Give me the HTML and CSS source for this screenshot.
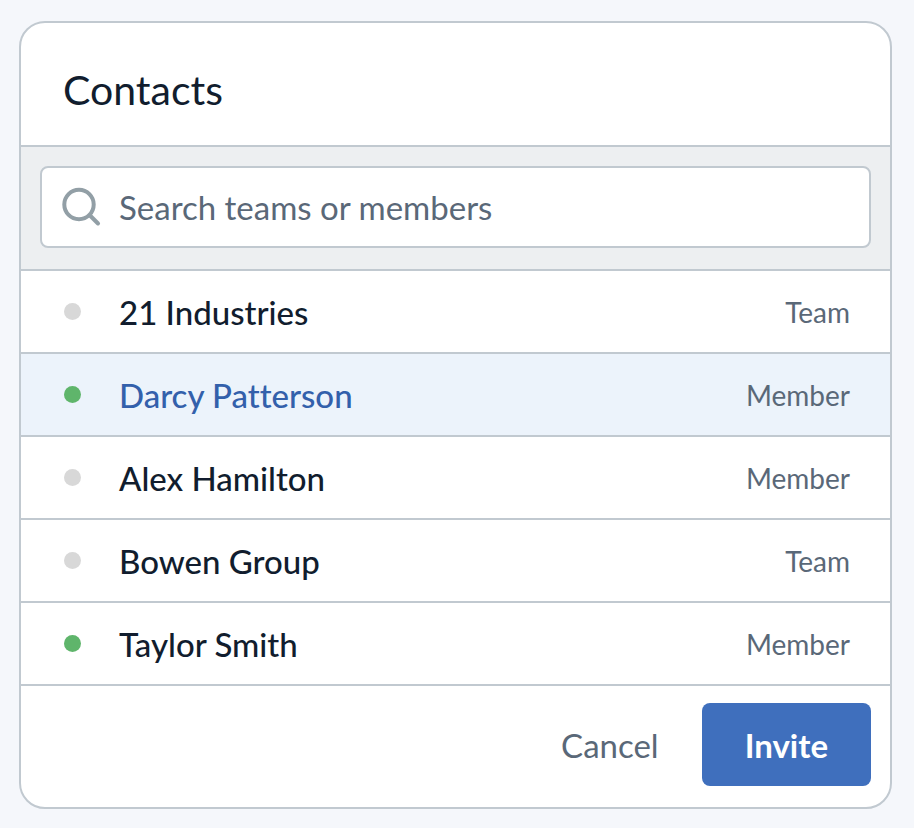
FILE: index.html
```
<!DOCTYPE html>
<html lang="en">
<head>
    <meta charset="UTF-8">
    <meta name="viewport" content="width=device-width, initial-scale=1.0">
    <title>Contacts</title>
    <link rel="stylesheet" href="styles.css">
</head>
<body>

    <div class="card">
        <header class="card-header">
            <h1>Contacts</h1>
        </header>

        <!-- Search Section -->
        <div class="search">
            <label class="search-box">
                <svg class="search-icon" viewBox="0 0 40 40" aria-hidden="true">
                    <circle cx="17" cy="17.5" r="14.7"></circle>
                    <path d="M28 28.5l8 8"></path>
                </svg>
                <input type="text" placeholder="Search teams or members" aria-label="Search teams or members">
            </label>
        </div>

        <!-- Contacts List -->
        <ul class="contacts">
            <li>
                <span class="status"></span>
                <span class="name">21 Industries</span>
                <span class="type">Team</span>
            </li>
            <li class="selected">
                <span class="status online"></span>
                <span class="name">Darcy Patterson</span>
                <span class="type">Member</span>
            </li>
            <li>
                <span class="status"></span>
                <span class="name">Alex Hamilton</span>
                <span class="type">Member</span>
            </li>
            <li>
                <span class="status"></span>
                <span class="name">Bowen Group</span>
                <span class="type">Team</span>
            </li>
            <li>
                <span class="status online"></span>
                <span class="name">Taylor Smith</span>
                <span class="type">Member</span>
            </li>
        </ul>

        <footer class="actions">
            <button type="button" class="cancel-button">Cancel</button>
            <button type="button" class="invite-button">Invite</button>
        </footer>
    </div>

</body>
</html>
```

FILE: styles.css
```
* {
    box-sizing: border-box;
}
body {
    font-family: Lato, "Open Sans", sans-serif;
    font-variant-ligatures: none;
    margin: 0;
    padding: 21px 22px 19px 19px;
    background-color: #f5f7fb;
    color: #111d2e;
}
.card {
    background-color: white;
    border: 2px solid #c1c9d0;
    border-radius: 26px;
    overflow: hidden;
}
.card-header {
    padding: 43px 42px 31px;
    border-bottom: 2px solid #c1c9d0;
}
h1 {
    margin: 0;
    font-size: 41px;
    font-weight: 400;
    line-height: 48px;
}
/* Search bar */
.search {
    padding: 19px 19px 21px;
    background-color: #edeff1;
    border-bottom: 2px solid #c1c9d0;
}
.search-box {
    display: flex;
    align-items: center;
    gap: 17px;
    height: 82px;
    padding: 0 20px;
    background-color: white;
    border: 2px solid #c1c9d0;
    border-radius: 8px;
}
.search-icon {
    flex: none;
    width: 40px;
    height: 40px;
    fill: none;
    stroke: #929fa6;
    stroke-width: 4;
    stroke-linecap: round;
}
input {
    flex: 1;
    min-width: 0;
    padding: 0;
    border: none;
    outline: none;
    background: none;
    color: #111d2e;
    font-family: inherit;
    font-size: 33px;
    line-height: 40px;
}
input::placeholder {
    color: #5a6878;
    opacity: 1;
}
/* Contact rows */
.contacts {
    margin: 0;
    padding: 0;
    list-style: none;
}
.contacts li {
    display: flex;
    align-items: center;
    height: 83px;
    padding: 0 40px 0 43px;
    border-bottom: 2px solid #c1c9d0;
}
.contacts .selected {
    background-color: #ecf3fb;
}
.status {
    width: 17px;
    height: 17px;
    margin-right: 38px;
    border-radius: 50%;
    background-color: #d8d8d8;
}
.online {
    background-color: #5fb56b;
}
.name {
    flex: 1;
    font-size: 33px;
    font-weight: 500;
    line-height: 40px;
}
.selected .name {
    color: #3360ab;
}
.type {
    color: #5a6878;
    font-size: 28px;
    line-height: 40px;
}
/* Footer buttons */
.actions {
    display: flex;
    justify-content: flex-end;
    padding: 17px 19px 21px;
}
button {
    height: 83px;
    padding: 0 43px;
    border: none;
    border-radius: 8px;
    font-family: inherit;
    font-size: 33px;
    line-height: 40px;
    cursor: pointer;
}
.cancel-button {
    background: none;
    color: #5a6878;
}
.invite-button {
    background-color: #3f6fbd;
    color: white;
    font-weight: 700;
}
```
